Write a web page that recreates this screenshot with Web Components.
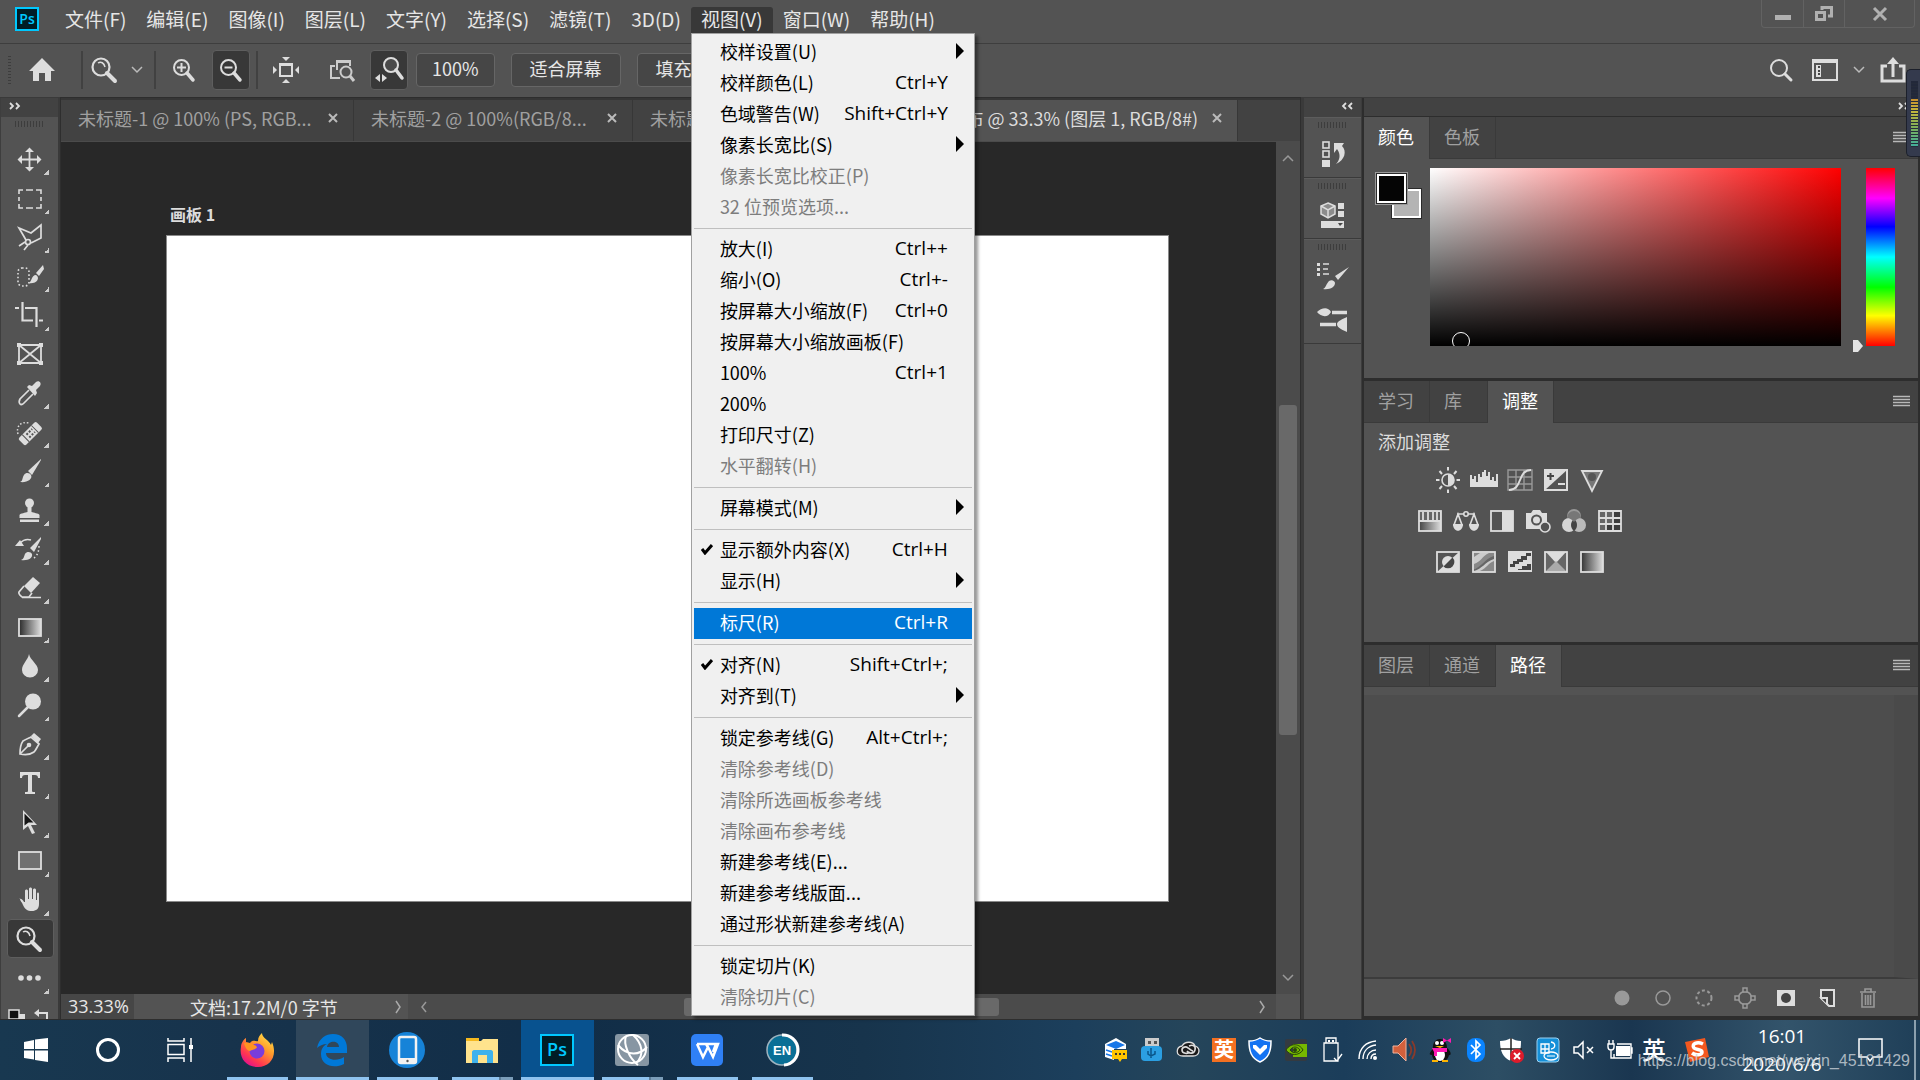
<!DOCTYPE html>
<html lang="zh-CN">
<head>
<meta charset="utf-8">
<title>Photoshop</title>
<style>
  html, body {
    margin: 0;
    height: 100%;
    overflow: hidden;
    background: #535353;
  }
  body {
    font-family: "Noto Sans CJK SC", "Noto Sans", sans-serif;
    font-size: 18px;
    color: #e6e6e6;
  }
</style>
</head>
<body>
<ps-app></ps-app>

<script>
// Shared reset, every shadow root starts with it
const base = `
  * { box-sizing: border-box; }
  button, input { font: inherit; color: inherit; border: 0; margin: 0; padding: 0; background: none; border-radius: 0; }
  button { display: flex; align-items: center; justify-content: center; white-space: nowrap; flex: none; }
`;

const brushHead = `<path d="M6 26c3-1 2-4 4-7 2-3 6-2 7 0 2 4-4 8-11 7z"/>`;

// name: [width, height, markup]
const icons = {
  psSmall: [24, 24, `<rect x="1" y="1" width="22" height="22" fill="#001d26" stroke="#00c8ff" stroke-width="2"/><text x="12" y="17" font-family="Open Sans" font-weight="600" font-size="14" fill="#00c8ff" text-anchor="middle">Ps</text>`],
  home: [26, 24, `<path d="M13 0 26 13h-4v10h-6v-8h-6v8H4V13H0z"/>`],
  zoom: [30, 30, `<g fill="none" stroke="#ddd"><circle cx="12" cy="12" r="8.5" stroke-width="2.2"/><path d="M9 8c3-2 6 0 7 4" stroke-width="1.5"/><path d="m18 18 8 8" stroke-width="4" stroke-linecap="round"/></g>`],
  zoomin: [24, 24, `<g fill="none" stroke="#ddd"><circle cx="9.5" cy="9.5" r="7.5" stroke-width="2"/><path d="M9.500 5v9M5 9.500h9" stroke-width="2"/><path d="m15 15 6 7" stroke-width="3.5" stroke-linecap="round"/></g>`],
  zoomout: [24, 24, `<g fill="none" stroke="#ddd"><circle cx="9.5" cy="9.5" r="7.5" stroke-width="2"/><path d="M5.500 9.500h8" stroke-width="2"/><path d="m15 15 6 7" stroke-width="3.5" stroke-linecap="round"/></g>`],
  fitview: [28, 28, `<path d="M10 1h8l-4 4zM10 27h8l-4-4zM1 10v8l4-4zM27 10v8l-4-4z"/><rect x="8" y="8" width="12" height="12" fill="none" stroke="#ddd" stroke-width="2"/><path d="M7 7h14v3H7z"/>`],
  zoomall: [26, 24, `<g fill="none" stroke="#ccc" stroke-width="2"><path d="M11 20H2V8h4M8 12V3h13v5M8 4h13"/><circle cx="17" cy="14" r="5.5" fill="#535353"/><path d="m21 18 4 5" stroke-width="3"/></g>`],
  scrubby: [28, 28, `<g fill="none" stroke="#ddd"><circle cx="16" cy="9" r="7" stroke-width="2" fill="#4a4a4a"/><path d="m21 14 6 8" stroke-width="3.5" stroke-linecap="round"/></g><path d="M5 18v8l-5-4zM7 18v8l5-4z"/>`],
  chevron: [12, 8, `<path d="m1 1 5 5 5-5" fill="none" stroke="#bbb" stroke-width="1.5"/>`],
  chevUp: [12, 8, `<path d="m1 7 5-5 5 5" fill="none" stroke="#999" stroke-width="1.5"/>`],
  chevDown: [12, 8, `<path d="m1 1 5 5 5-5" fill="none" stroke="#999" stroke-width="1.5"/>`],
  chevLeft: [8, 12, `<path d="m6 1-4 5 4 5" fill="none" stroke="#999" stroke-width="1.5"/>`],
  chevRight: [8, 14, `<path d="m2 1 4 6-4 6" fill="none" stroke="#aaa" stroke-width="1.5"/>`],
  expand: [12, 8, `<path d="m1 1 3 3-3 3M7 1l3 3-3 3" fill="none" stroke="#ddd" stroke-width="1.8"/>`],
  collapse: [12, 8, `<path d="M5 1 2 4l3 3M11 1 8 4l3 3" fill="none" stroke="#ddd" stroke-width="1.8"/>`],
  close: [10, 10, `<path d="m1 1 8 8m0-8-8 8" fill="none" stroke="#bbb" stroke-width="2"/>`],
  menu: [17, 12, `<path d="M0 1.500h17M0 4.500h17M0 7.500h17M0 10.500h17" stroke="#b8b8b8" stroke-width="1.5"/>`],
  min: [16, 16, `<path d="M0 9h16v5H0z" fill="#b0b0b0"/>`],
  restore: [18, 16, `<g fill="none" stroke="#b0b0b0" stroke-width="3"><path d="M7 4V1.500h9.500V10H13"/><rect x="1.5" y="6.5" width="8" height="7"/></g>`],
  closeWin: [16, 14, `<path d="m2 1 12 12M14 1 2 13" stroke="#b0b0b0" stroke-width="3"/>`],
  search: [24, 24, `<g fill="none" stroke="#ddd"><circle cx="10" cy="10" r="8" stroke-width="2"/><path d="m16 16 6 6" stroke-width="3" stroke-linecap="round"/></g>`],
  workspace: [26, 22, `<rect x="1" y="1" width="24" height="20" fill="none" stroke="#ddd" stroke-width="2"/><path d="M1 1h24v3H1zM4 6h5v12H4z"/><path d="M6 8h2M6 12h2M6 15h2" stroke="#444" stroke-width="2"/>`],
  share: [26, 26, `<path d="M7 9H2v15h22V9h-5M13 20V5" fill="none" stroke="#ddd" stroke-width="3"/><path d="M13 0 7 7h12z"/>`],

  move: [30, 30, `<path d="M15.500 5v21M5 15.500h21" stroke="#ddd" stroke-width="1.8"/><path d="m15.500 3.500 4.500 4.500h-9zM15.500 27.500 20 23h-9zM3.500 15.500 8 11v9zM27.500 15.500 23 11v9z"/>`],
  marquee: [30, 30, `<path d="M5 11V7h4M12 7h7M22 7h5v4M27 14v4M27 21v4h-5M19 25h-7M9 25H5v-4M5 18v-4" fill="none" stroke="#ddd" stroke-width="1.6"/>`],
  lasso: [30, 30, `<g fill="none" stroke="#ddd" stroke-width="1.7"><path d="M12 18 5 6l12 5 10-8v13l-10 5"/><circle cx="14" cy="20" r="2.5"/><path d="m11 20-6 4M14 23l-4 5"/></g>`],
  quicksel: [30, 30, `<rect x="4" y="7" width="11" height="18" rx="4" fill="none" stroke="#ddd" stroke-width="1.6" stroke-dasharray="1.6 2.2"/><path d="m29 4-7 8 3 3 5-7z"/><path d="M14 22c4 0 3-8 8-8 5 3 0 10-8 8z"/>`],
  crop: [30, 30, `<path d="M8.500 2v18.500H19M1 8h4M11 8h11.500v19M25 20.500h4" fill="none" stroke="#ddd" stroke-width="2.2"/>`],
  frame: [30, 30, `<path d="M5 6h22v18H5zM5 6l22 18M27 6 5 24" fill="none" stroke="#ddd" stroke-width="1.8"/><path d="M3 4h4v4H3zM25 4h4v4h-4zM3 22h4v4H3zM25 22h4v4h-4z"/>`],
  eyedropper: [30, 30, `<path d="m15 12-9 9c-1 2-1 4 0 5s3 0 4-1l9-9" fill="none" stroke="#ddd" stroke-width="1.7"/><path d="m13 9 2-2 3 1 4-4c3-2 6 1 4 4l-4 4 1 3-2 3z"/>`],
  heal: [30, 30, `<path d="M4 17c-2-7 2-13 11-11" fill="none" stroke="#ddd" stroke-width="1.5" stroke-dasharray="1.5 2"/><g transform="rotate(-45 16 17)"><rect x="4" y="12" width="25" height="10" rx="2"/><path d="M10 12v10M23 12v10" stroke="#535353"/><path d="M13 15h8M13 19h8" stroke="#535353" stroke-width="2" stroke-dasharray="2 1.5"/></g>`],
  brush: [30, 30, `<path d="M27 3 14 15l4 4L27 4z"/>${brushHead}`],
  stamp: [30, 30, `<circle cx="15.5" cy="8" r="4.5"/><path d="M13.500 11h4v6c2 1 7 1 8 3v3h-20v-3c1-2 6-2 8-3zM6 24.500h19V27H6z"/>`],
  history: [30, 30, `<path d="M27 3 16 14l4 4L27 5zM7 26c3-1 3-4 4-6 2-3 6-2 7 0 1 4-4 7-11 6zM1 12l5-6 4 6z"/><path d="M6 9c4-4 8-4 11-3" fill="none" stroke="#ddd" stroke-width="1.5"/><path d="M25 12c0 6-2 10-6 13" fill="none" stroke="#ddd" stroke-width="1.5" stroke-dasharray="1.5 2.5"/>`],
  eraser: [30, 30, `<path d="m19 4 7 6-9 10-7-7z"/><path d="m10 13-5 6c-1 2 2 4 3 5h7l3-4M8 24.500h19" fill="none" stroke="#ddd" stroke-width="1.7"/>`],
  gradient: [30, 30, `<defs><linearGradient id="g"><stop stop-color="#2a2a2a"/><stop offset="1" stop-color="#ddd"/></linearGradient></defs><rect x="5" y="7" width="22" height="17" fill="url(#g)" stroke="#ddd" stroke-width="1.8"/>`],
  blur: [30, 30, `<path d="M15 3c1 6 9 10 9 16a8 7.500 0 0 1-16 0c0-6 6-10 7-16z"/>`],
  dodge: [30, 30, `<circle cx="19" cy="11.5" r="8"/><path d="m14 17-9 9" stroke="#ddd" stroke-width="2.5" stroke-linecap="round"/>`],
  pen: [30, 30, `<path d="M6 25c0-5 0-9 3-13 3-2 6-3 8-4l8 7c-2 3-3 6-5 8-4 3-9 3-14 2zl8-8" fill="none" stroke="#ddd" stroke-width="1.7"/><circle cx="15" cy="16" r="2.3"/><path d="m17 7 3-3 7 6-3 4z"/>`],
  type: [30, 30, `<path d="M6 4h20v6h-2c0-2-1-3-3-3h-3v16c0 1 1 1 3 1v2H11v-2c2 0 3 0 3-1V7h-3c-2 0-3 1-3 3H6z"/>`],
  select: [30, 30, `<path d="M9 3v20l5-4 4 8 3-1-4-8h6z"/><path d="M10.500 6.500v12l4-3h5z" fill="#161616"/>`],
  rect: [30, 30, `<rect x="5" y="6" width="22" height="17" fill="#707070" stroke="#ddd" stroke-width="1.8"/>`],
  hand: [30, 30, `<path d="M5 14c2-1 4 1 5 3h1V6c0-2 3-2 3 0v8h1V4c0-2 3-2 3 0v10h1V5c0-2 3-2 3 0v10h1V9c0-2 2-2 2 0v10c0 5-3 7-7 7-5 0-7-2-9-6-1-3-3-4-3-6z"/>`],
  dots: [30, 30, `<circle cx="7" cy="15" r="2.8"/><circle cx="15.5" cy="15" r="2.8"/><circle cx="24" cy="15" r="2.8"/>`],
  swatchMini: [44, 18, `<path d="M10 6h7v12H3v-6h7z"/><rect x="1" y="2" width="10" height="9" fill="#111" stroke="#ddd" stroke-width="1.5"/><path d="M30 5h9v10" fill="none" stroke="#ddd" stroke-width="2"/><path d="m26 5 5-4v8zM35 12h8l-4 5z"/>`],

  historyPanel: [30, 28, `<g fill="none" stroke="#ddd" stroke-width="1.6"><rect x="5" y="2" width="6" height="6"/><rect x="5" y="11" width="6" height="6"/></g><path d="M4 20h8v7H4zM16 3h10l-2 3c5 5 3 14-6 18 4-4 5-10 1-15l-3 4z"/>`],
  libPanel: [30, 28, `<path d="m10 2 7 3v8l-7 4-7-4V5z" fill="#8c8c8c" stroke="#ddd" stroke-width="1.5"/><path d="m3 5 7 4 7-4M10 9v8" fill="none" stroke="#ddd" stroke-width="1.5"/><path d="M20 2h6v6h-6zM20 10h6v6h-6zM3 20h23v7H3z"/><path d="M20 22h5l-3 3z" fill="#444"/>`],
  brushPanel: [34, 28, `<path d="M1 1h3v3H1zM1 6h3v3H1zM1 11h3v3H1zM33 5 19 14l3 4zM7 27c3-1 3-5 6-8 3-2 6 0 6 2 0 4-5 7-12 6z"/><path d="M7 2h6M7 7h5M7 12h6" stroke="#ddd" stroke-width="1.6"/>`],
  brushSet: [34, 28, `<path d="M1 6c4-4 11-6 14 0-3 6-10 5-14 0zM31 11v15c-4-2-10-4-10-8 0-3 6-5 10-7z"/><path d="M16 6.500h15M4 18.500h16" stroke="#ddd" stroke-width="3.5"/>`],

  bright: [26, 26, `<circle cx="13" cy="13" r="6" fill="none" stroke="#ddd" stroke-width="1.6"/><path d="M13 7a6 6 0 0 1 0 12z"/><path d="M13 0v3.500M13 22.500V26M1 13h3.500M21.500 13H25M4.500 4l2.500 3M19 19l2.500 3M21.500 4 19 7M7 19l-2.500 3" stroke="#ddd" stroke-width="2"/>`],
  levels: [28, 26, `<path d="M0 20V8h2v4h2V9h2v6h2V7h2v3h2V5h2V3h2v6h2V5h2v8h2v-3h2v4h2V7h2v13z"/>`],
  curves: [26, 26, `<path d="M1 3h24v20H1zM9 3v20M17 3v20M1 10h24M1 17h24" fill="none" stroke="#999" stroke-width="1.4"/><path d="M2 23c14 0 8-20 22-20" fill="none" stroke="#ddd" stroke-width="2"/>`],
  exposure: [26, 26, `<rect x="2" y="3" width="22" height="20" fill="#535353" stroke="#ddd" stroke-width="2"/><path d="M2 3h22L2 23z"/><path d="M4 9h7M7.500 6v7" stroke="#444" stroke-width="2"/><path d="M15 17h7" stroke="#ddd" stroke-width="2"/>`],
  vibrance: [26, 26, `<path d="M3 4h20L13 24z" fill="#777" stroke="#ddd" stroke-width="1.8"/><circle cx="13" cy="10" r="4" fill="#555"/>`],
  hsl: [26, 26, `<rect x="2" y="3" width="22" height="20" fill="url(#h)" stroke="#ddd" stroke-width="1.8"/><defs><linearGradient id="h"><stop stop-color="#444"/><stop offset="1" stop-color="#ddd"/></linearGradient></defs><path d="M3 4h20v8H3z" fill="#666"/><path d="M6 4v8M11 4v8M16 4v8M20 4v8M2 13h22" stroke="#ddd" stroke-width="1.8"/>`],
  balance: [28, 26, `<g fill="none" stroke="#ddd" stroke-width="1.6"><path d="M5 6h7M16 6h7M6 6 2 17h8zM22 6l-4 11h8z"/><circle cx="14" cy="6" r="2.2"/></g><path d="M1 16h10c0 9-10 9-10 0zM17 16h10c0 9-10 9-10 0z"/>`],
  bw: [26, 26, `<rect x="2" y="3" width="22" height="20" fill="none" stroke="#ddd" stroke-width="1.8"/><path d="M13 3h11v20H13z"/>`],
  photo: [28, 28, `<path d="M2 6h5l2-3h7l2 3h5v16H2z"/><circle cx="12.5" cy="13" r="4.5" fill="none" stroke="#535353" stroke-width="2"/><circle cx="21" cy="20" r="5" fill="#535353" stroke="#ddd" stroke-width="1.6"/>`],
  mixer: [26, 26, `<circle cx="13" cy="8" r="7" fill="#999"/><circle cx="8" cy="17" r="7" fill="#d5d5d5"/><circle cx="18" cy="17" r="7" fill="#bbb"/><path d="M13 11c4 3 4 9 0 12-4-3-4-9 0-12z" fill="#444"/><path d="M6 10a7 7 0 0 1 14 0c-3 0-4 1-7 4-3-3-4-4-7-4z" fill="#777"/>`],
  lookup: [26, 26, `<rect x="2" y="3" width="22" height="20" fill="#3c3c3c"/><path d="M2 3h15v13H9v6H2z" fill="#666"/><path d="M2 3h22v20H2zM9 3v20M16 3v20M2 10h22M2 16h22" fill="none" stroke="#ddd" stroke-width="1.8"/>`],
  invert: [26, 26, `<rect x="2" y="3" width="22" height="20" fill="#535353" stroke="#ddd" stroke-width="1.8"/><path d="M24 3v20H2z"/><circle cx="13" cy="13" r="6" fill="#ddd"/><path d="M17.500 8.500a6 6 0 0 1-9 9z" fill="#444"/>`],
  poster: [26, 26, `<rect x="2" y="3" width="22" height="20" fill="#888" stroke="#ddd" stroke-width="1.8"/><path d="M3 15C10 13 11 7 18 4H9L3 8zM3 22h6c7-3 8-8 14-10v-3C15 11 13 18 3 20z" fill="#ccc"/><path d="M3 20c8-2 10-10 20-13v3C14 13 11 20 3 22z" fill="#666"/>`],
  threshold: [26, 26, `<rect x="1" y="2" width="24" height="21"/><path d="M3 15h3v-3h4v-2h4V7h5V4h5v3h-4v4h-4v2h-4v2H8v3H3zM11 20h4v-3h5v-2h4v6H11z" fill="#444"/>`],
  selective: [26, 26, `<rect x="2" y="3" width="22" height="20" fill="#666" stroke="#ddd" stroke-width="1.8"/><path d="M3 3h20L13 14z"/><path d="m13 12 10 10H3z" fill="#aaa"/>`],
  gradmap: [26, 26, `<defs><linearGradient id="m"><stop stop-color="#333"/><stop offset="1" stop-color="#ddd"/></linearGradient></defs><rect x="2" y="3" width="22" height="20" fill="url(#m)" stroke="#ddd" stroke-width="1.8"/>`],

  fillPath: [24, 24, `<circle cx="12" cy="12" r="7.5" fill="#999"/>`],
  strokePath: [24, 24, `<circle cx="12" cy="12" r="7" fill="none" stroke="#999" stroke-width="1.5"/>`],
  loadPath: [24, 24, `<circle cx="12" cy="12" r="7.5" fill="none" stroke="#999" stroke-width="2" stroke-dasharray="3 2.5"/>`],
  workPath: [24, 24, `<circle cx="12" cy="12" r="6.5" fill="none" stroke="#999" stroke-width="1.5"/><path d="M10 2h4v4h-4zM10 18h4v4h-4zM2 10h4v4H2zM18 10h4v4h-4z" fill="#535353" stroke="#999" stroke-width="1.5"/>`],
  mask: [24, 24, `<path d="M3 4h18v16H3z"/><circle cx="12" cy="12" r="5" fill="#444"/>`],
  newItem: [24, 24, `<path d="M6 4h13v16h-5l-8-8z" fill="#444" stroke="#ddd" stroke-width="2"/><path d="M4 11h9v9z" fill="#ddd"/><path d="M7 13h4v4z" fill="#444"/>`],
  trash: [24, 24, `<g fill="none" stroke="#999" stroke-width="1.6"><path d="M4 6h16M9 6V3h6v3M6 7v14h12V7M9.500 9v10M12 9v10M14.500 9v10"/></g>`],

  start: [26, 26, `<path d="m1 5 10-2v9H1zM12 2.500 25 1v11H12zM1 13.500h10v9L1 21zM12 13.500h13V25l-13-2z" fill="#fff"/>`],
  cortana: [26, 26, `<circle cx="13" cy="13" r="10.5" fill="none" stroke="#fff" stroke-width="3"/>`],
  taskview: [26, 26, `<g fill="none" stroke="#fff" stroke-width="1.5"><path d="M1 1v3h16V1M1 25v-4h16v4M1 7.500h16v10H1zM24 1v24"/></g><path d="M22 8h4v4h-4z" fill="#fff"/>`],
  firefox: [36, 36, `<defs><linearGradient id="f" x1="1" y1="0" x2=".3" y2="1"><stop stop-color="#fff44f"/><stop offset=".45" stop-color="#ff9a2b"/><stop offset=".8" stop-color="#ff3750"/><stop offset="1" stop-color="#e3138a"/></linearGradient></defs><path d="M23 1c0 5 7 7 9 12l1-3c6 14-2 25-14 25C6 35 0 25 2 15c0-4 3-8 5-9v4l4 1c3-4 6-1 8-2 0-4 2-6 4-8z" fill="url(#f)"/><circle cx="18" cy="19" r="7.5" fill="#7a3ddb"/><path d="M5 11c5-1 9 0 13 4-1 3-5 2-7 4-3 0-5-4-6-8z" fill="#ff9420"/>`],
  edge: [32, 34, `<path d="M1 15C3 5 10 1 17 1c9 0 14 6 14 14v5H10c0 7 11 9 18 4v7C18 36 5 33 5 21c0-5 2-8 6-10C7 11 3 13 1 15zm10-1h12c0-7-11-7-12 0z" fill="#0078d7"/>`],
  phone: [36, 36, `<circle cx="18" cy="18" r="18" fill="#1683d8"/><rect x="10" y="5" width="17" height="26" rx="2" fill="#1683d8" stroke="#f2f2f2" stroke-width="2.5"/><path d="M10 26h17v5H10z" fill="#f2f2f2"/><circle cx="18.5" cy="29" r="1.2" fill="#555"/>`],
  explorer: [34, 28, `<path d="M1 2h13v4H1z" fill="#f5b91f"/><path d="M1 5h15l2-2h15v24H1z" fill="#ffe38d"/><path d="M7 27V16c0-1 1-2 2-2h17c1 0 2 1 2 2v11h-6v-8h-9v8z" fill="#3fb2ec"/>`],
  psBig: [36, 34, `<rect x="2" y="2" width="32" height="30" fill="#001d26" stroke="#00c8ff" stroke-width="2"/><text x="18" y="23" font-family="Open Sans" font-weight="600" font-size="18" fill="#00c8ff" text-anchor="middle">Ps</text>`],
  globe: [36, 34, `<rect x="1" y="1" width="34" height="32" rx="3" fill="#8796a3"/><g fill="none" stroke="#fff" stroke-width="2"><circle cx="18" cy="16" r="14"/><path d="M4 12c10 12 22 10 29 2M12 3c-3 8 3 22 12 29M19 2c9 8 12 20 3 28"/></g>`],
  wps: [34, 34, `<rect x="1" y="1" width="32" height="32" rx="5" fill="#2f80f5"/><path d="M7 11h21l-5 13-5-10-5 10-6-13m9 0 3 5m7-5-3 8" fill="none" stroke="#fff" stroke-width="2.5"/>`],
  en: [34, 34, `<circle cx="17" cy="17" r="15" fill="#0a6f96" stroke="#9fb4c0" stroke-width="1.5"/><path d="M17 2a15 15 0 0 1 2 30" fill="none" stroke="#fff" stroke-width="3"/><text x="17" y="22" font-family="Liberation Sans" font-weight="700" font-size="13" fill="#fff" text-anchor="middle">EN</text>`],

  t1: [26, 26, `<path d="M2 7 13 1l10 6v5H11v11L2 20z" fill="#fff"/><path d="m3 8 10-4 9 4-9 4z" fill="#1877e8"/><path d="M3 13l6 2M3 17l6 2" stroke="#1877e8" stroke-width="1.5"/><path d="M9 13h15v9h-5l-2 3-2-3H9z" fill="#ffc400"/><path d="M12 17h2M16 17h2M20 17h2" stroke="#333" stroke-width="2"/>`],
  t2: [24, 26, `<path d="M5 1h14v9H5z" fill="#ccc"/><path d="M8 4h3v3H8zM14 4h3v3h-3z" fill="#555"/><rect x="1" y="9" width="21" height="15" rx="4" fill="#2b9fe2"/><path d="M11 21V11M8 14v3l3 2 4-2v-3" fill="none" stroke="#0a568a" stroke-width="1.5"/>`],
  t3: [24, 20, `<g fill="none"><path d="M7 16c-8 0-7-9-1-10 3-5 11-5 13 0 6 2 5 10-2 10z" fill="#1a1a1a" stroke="#ddd" stroke-width="1.3"/><path d="M13 6c4-2 7 0 6 4-1 4-6 4-8 1M14 12c-2 2-8 2-8-2 0-3 4-4 6-2 2 1 3 3 5 3" stroke="#ddd" stroke-width="1.6"/></g>`],
  t4: [24, 24, `<path d="M0 0h24v24H0z" fill="#f37021"/><text x="12" y="19" font-family="Noto Sans CJK SC" font-weight="700" font-size="20" fill="#fff" text-anchor="middle">英</text>`],
  t5: [24, 26, `<path d="M12 1c3 2 7 3 11 3 0 10-2 17-11 21C3 21 1 14 1 4c4 0 8-1 11-3z" fill="#1473f2" stroke="#fff" stroke-width="1.5"/><path d="M5 8h14v3l-7 7-7-7z" fill="#fff"/><path d="m8 8 4 4 4-4z" fill="#1473f2"/>`],
  t6: [24, 24, `<rect x="1" y="1" width="22" height="22" rx="2" fill="#343a40"/><path d="M9 6h14v13H9z" fill="#76b900"/><path d="M2 12c5-8 14-6 17 0-4 6-13 6-17 0zm4 0c3 4 8 3 10 0-3-4-7-4-10 0z" fill="#76b900" stroke="#28450b"/><circle cx="11" cy="12" r="2" fill="#28450b"/>`],
  t7: [24, 28, `<g fill="none" stroke="#fff" stroke-width="1.3"><path d="M6 7V2h10v5M4 7h14v18H4zM14 22l3 3 5-7"/></g><path d="M8 4h2v2H8zM12 4h2v2h-2z" fill="#fff"/>`],
  t8: [22, 22, `<g fill="none" stroke="#fff" stroke-width="1.4"><path d="M2 20C2 9 9 3 19 2M6 20C6 12 11 7 19 6M10 20c0-5 4-9 9-9M14 20c0-3 2-5 5-5"/></g><circle cx="18" cy="19" r="2" fill="#fff"/>`],
  t9: [24, 26, `<path d="M1 9h5l8-8v23l-8-8H1z" fill="#d2603c" stroke="#f1b39d"/><path d="M17 7c3 4 3 8 0 12M20 4c4 6 4 12 0 18" fill="none" stroke="#8a3a2a" stroke-width="1.8"/>`],
  t10: [24, 26, `<path d="M5 12c-1-13 14-13 14-1 5 4 4 8 2 7-1 5-5 7-9 7s-7-2-8-7c-4 0-2-3 1-6z" fill="#111"/><ellipse cx="12" cy="18" rx="5" ry="6" fill="#fff"/><circle cx="9" cy="6" r="2" fill="#fff"/><circle cx="14" cy="6" r="2" fill="#fff"/><path d="M7 9h9l-4 2z" fill="#ffb400"/><path d="M4 11h15v4H9v4H6v-4zM15 1l8 5V1l-8 5z" fill="#ff19b4"/><path d="M4 23h6v2H4zM14 23h6v2h-6z" fill="#ffb400"/>`],
  t11: [20, 26, `<rect x="1" y="1" width="18" height="24" rx="8" fill="#0a84ff"/><path d="m5 8 9 9-4 4V4l4 4-9 9" fill="none" stroke="#fff" stroke-width="1.7"/>`],
  t12: [26, 28, `<path d="M12 2c3 2 6 3 10 3 0 11-2 17-10 20C4 22 1 15 1 5c4 0 8-1 11-3z" fill="#fff"/><path d="M12 2v23M1 13h22" stroke="#222" stroke-width="1.5"/><circle cx="18" cy="20" r="7" fill="#dd1c2b"/><path d="m15 17 6 6m0-6-6 6" stroke="#fff" stroke-width="1.8"/>`],
  t13: [24, 26, `<rect x="1" y="1" width="22" height="24" rx="3" fill="#1590d8" stroke="#9cd2f2"/><g fill="none" stroke="#fff" stroke-width="1.3"><path d="M5 7h8v9H5zM9 7v9M5 12h8M15 5c5 1 5 6 0 7"/><ellipse cx="15" cy="19" rx="7" ry="4"/></g><path d="M11 19h8" stroke="#fff"/>`],
  t14: [24, 24, `<g fill="none" stroke="#fff" stroke-width="1.5"><path d="M2 9h4l5-5v16l-5-5H2zM15 9l6 6m0-6-6 6"/></g>`],
  t15: [26, 20, `<path d="M9 6h14v10H9z" fill="#fff"/><path d="M10 4h14v14H7v-4M24 8h1v5h-1M1 4v3c0 4 6 4 6 0V4zM4 10v8h3M2 0v4M6 0v4" fill="none" stroke="#fff" stroke-width="1.4"/>`],
  t16: [26, 26, `<path d="M1 5 21 1l4 19-19 5z" fill="#f4581f"/><path d="M19 7c-6-3-12 0-9 4 2 2 8 1 8 4 0 3-6 4-10 1" fill="none" stroke="#fff" stroke-width="3.5"/>`],
  notice: [26, 26, `<path d="M1 2h23v18h-9l-3 4-3-4H1z" fill="none" stroke="#fff" stroke-width="1.5"/>`],
};

class PsIcon extends HTMLElement {
  constructor() {
    super();
    this.attachShadow({ mode: "open" });
  }

  connectedCallback() {
    const [w, h, body] = icons[this.getAttribute("name")];
    this.shadowRoot.innerHTML = `
      <style>
        :host { display: inline-block; flex: none; }
        svg { display: block; overflow: visible; }
      </style>
      <svg width="${w}" height="${h}" viewBox="0 0 ${w} ${h}" fill="#ddd" aria-hidden="true">${body}</svg>`;
  }
}

/* one row of a drop-down menu */
class PsMenuItem extends HTMLElement {
  constructor() {
    super();
    this.attachShadow({ mode: "open" });
  }

  connectedCallback() {
    const key = this.getAttribute("key") || "";
    const has = (name) => this.hasAttribute(name);
    this.shadowRoot.innerHTML = `
      <style>
        ${base}
        :host { display: block; }
        button {
          width: 100%;
          height: 31px;
          padding-bottom: 3px;
          display: grid;
          grid-template-columns: 26px 1fr auto 24px;
          justify-items: start;
          color: #000;
          font-size: 18px;
          line-height: 28px;
        }
        button:disabled { color: #7d7d7d; }
        :host([active]) button { background: #0078d7; color: #fff; }
        .key { font-family: "Open Sans", "Noto Sans", sans-serif; font-size: 19px; }
        svg { display: block; justify-self: center; }
      </style>
      <button role="menuitem" ${has("off") ? "disabled" : ""}>
        ${has("checked") ? `<svg width="12" height="12" viewBox="0 0 12 12"><path d="M1 6l3 4 7-8" fill="none" stroke="#000" stroke-width="3"/></svg>` : "<span></span>"}
        <slot></slot>
        <span class="key">${key}</span>
        ${has("sub") ? `<svg width="8" height="16" viewBox="0 0 8 16"><path d="M0 0l8 8-8 8z"/></svg>` : "<span></span>"}
      </button>`;
  }
}

class PsMenu extends HTMLElement {
  constructor() {
    super();
    this.attachShadow({ mode: "open" });
  }

  connectedCallback() {
    this.shadowRoot.innerHTML = `
      <style>
        :host {
          display: block;
          width: 284px;
          padding: 3px 2px 2px;
          box-sizing: border-box;
          background: #f0f0f0;
          border: 1px solid #a0a0a0;
          box-shadow: 3px 3px 3px rgba(0, 0, 0, .4);
        }
        ::slotted(hr) { height: 1px; margin: 5px 0; border: 0; background: #bfbfbf; }
      </style>
      <slot></slot>`;
  }
}

class PsMenubar extends HTMLElement {
  constructor() {
    super();
    this.attachShadow({ mode: "open" });
  }

  connectedCallback() {
    const before = ["文件(F)", "编辑(E)", "图像(I)", "图层(L)", "文字(Y)", "选择(S)", "滤镜(T)", "3D(D)"];
    const after = ["窗口(W)", "帮助(H)"];
    this.shadowRoot.innerHTML = `
      <style>
        ${base}
        :host { display: flex; height: 43px; background: #535353; border-bottom: 1px solid #3e3e3e; }
        nav { display: flex; align-items: flex-start; padding: 7px 0 0 15px; flex: 1; }
        nav > ps-icon { margin-right: 16px; }
        button { height: 26px; padding: 0 10px 4px; font-size: 19px; }
        .open { position: relative; z-index: 10; }
        .open > button { background: #383838; border-radius: 3px 3px 0 0; }
        ps-menu { position: absolute; top: 100%; left: 0; }
        .win { display: flex; height: 28px; margin-right: 5px; border: 1px solid #626262; border-top: 0; border-radius: 0 0 4px 4px; }
        .win button { width: 41px; height: 27px; padding: 0; }
        .win button + button { border-left: 1px solid #626262; }
        .win .x { width: 70px; }
      </style>
      <nav aria-label="菜单栏">
        <ps-icon name="psSmall"></ps-icon>
        ${before.map((t) => `<button>${t}</button>`).join("")}
        <div class="open">
          <button>视图(V)</button>
          <ps-menu role="menu">
            <ps-menu-item sub>校样设置(U)</ps-menu-item>
            <ps-menu-item key="Ctrl+Y">校样颜色(L)</ps-menu-item>
            <ps-menu-item key="Shift+Ctrl+Y">色域警告(W)</ps-menu-item>
            <ps-menu-item sub>像素长宽比(S)</ps-menu-item>
            <ps-menu-item off>像素长宽比校正(P)</ps-menu-item>
            <ps-menu-item off>32 位预览选项...</ps-menu-item>
            <hr>
            <ps-menu-item key="Ctrl++">放大(I)</ps-menu-item>
            <ps-menu-item key="Ctrl+-">缩小(O)</ps-menu-item>
            <ps-menu-item key="Ctrl+0">按屏幕大小缩放(F)</ps-menu-item>
            <ps-menu-item>按屏幕大小缩放画板(F)</ps-menu-item>
            <ps-menu-item key="Ctrl+1">100%</ps-menu-item>
            <ps-menu-item>200%</ps-menu-item>
            <ps-menu-item>打印尺寸(Z)</ps-menu-item>
            <ps-menu-item off>水平翻转(H)</ps-menu-item>
            <hr>
            <ps-menu-item sub>屏幕模式(M)</ps-menu-item>
            <hr>
            <ps-menu-item checked key="Ctrl+H">显示额外内容(X)</ps-menu-item>
            <ps-menu-item sub>显示(H)</ps-menu-item>
            <hr>
            <ps-menu-item active key="Ctrl+R">标尺(R)</ps-menu-item>
            <hr>
            <ps-menu-item checked key="Shift+Ctrl+;">对齐(N)</ps-menu-item>
            <ps-menu-item sub>对齐到(T)</ps-menu-item>
            <hr>
            <ps-menu-item key="Alt+Ctrl+;">锁定参考线(G)</ps-menu-item>
            <ps-menu-item off>清除参考线(D)</ps-menu-item>
            <ps-menu-item off>清除所选画板参考线</ps-menu-item>
            <ps-menu-item off>清除画布参考线</ps-menu-item>
            <ps-menu-item>新建参考线(E)...</ps-menu-item>
            <ps-menu-item>新建参考线版面...</ps-menu-item>
            <ps-menu-item>通过形状新建参考线(A)</ps-menu-item>
            <hr>
            <ps-menu-item>锁定切片(K)</ps-menu-item>
            <ps-menu-item off>清除切片(C)</ps-menu-item>
          </ps-menu>
        </div>
        ${after.map((t) => `<button>${t}</button>`).join("")}
      </nav>
      <div class="win">
        <button aria-label="最小化"><ps-icon name="min"></ps-icon></button>
        <button aria-label="还原"><ps-icon name="restore"></ps-icon></button>
        <button class="x" aria-label="关闭"><ps-icon name="closeWin"></ps-icon></button>
      </div>`;
  }
}

class PsOptions extends HTMLElement {
  constructor() {
    super();
    this.attachShadow({ mode: "open" });
  }

  connectedCallback() {
    this.shadowRoot.innerHTML = `
      <style>
        ${base}
        :host { display: flex; align-items: center; height: 53px; padding-bottom: 2px; background: #535353; box-sizing: border-box; }
        .grip { width: 3px; height: 28px; margin-left: 8px; background: repeating-linear-gradient(#3d3d3d 0 1px, transparent 1px 3px); }
        .sep { width: 2px; height: 38px; background: #414141; flex: none; }
        .tool { width: 38px; height: 40px; border-radius: 4px; }
        .on { background: #383838; border: 1px solid #5e5e5e; }
        .home { width: 62px; margin-right: 8px; }
        .zoom { width: 71px; padding-right: 6px; gap: 12px; }
        .wide { width: 56px; }
        .after-group { margin-right: 6px; }
        .text { height: 34px; margin-right: 16px; padding: 0 18px 4px; border: 1px solid #666; border-radius: 4px; background: #464646; }
        .text.first { margin-left: 8px; padding: 0 15px 4px; }
        .right { display: flex; align-items: center; gap: 15px; margin-left: auto; padding-right: 14px; }
        .right > :first-child { margin-right: 4px; }
      </style>
      <span class="grip"></span>
      <button class="home" aria-label="主页"><ps-icon name="home"></ps-icon></button>
      <span class="sep"></span>
      <button class="zoom" aria-label="缩放工具"><ps-icon name="zoom"></ps-icon><ps-icon name="chevron"></ps-icon></button>
      <span class="sep"></span>
      <button class="tool wide" aria-label="放大"><ps-icon name="zoomin"></ps-icon></button>
      <button class="tool on after-group" aria-label="缩小"><ps-icon name="zoomout"></ps-icon></button>
      <span class="sep"></span>
      <button class="tool wide" aria-label="调整窗口大小以满屏显示"><ps-icon name="fitview"></ps-icon></button>
      <button class="tool wide" aria-label="缩放所有窗口"><ps-icon name="zoomall"></ps-icon></button>
      <button class="tool on" aria-label="细微缩放"><ps-icon name="scrubby"></ps-icon></button>
      <button class="text first">100%</button>
      <button class="text">适合屏幕</button>
      <button class="text">填充屏幕</button>
      <div class="right">
        <button aria-label="搜索"><ps-icon name="search"></ps-icon></button>
        <button aria-label="工作区"><ps-icon name="workspace"></ps-icon></button>
        <button aria-label="选择工作区"><ps-icon name="chevron"></ps-icon></button>
        <button aria-label="共享"><ps-icon name="share"></ps-icon></button>
      </div>`;
  }
}

class PsToolbar extends HTMLElement {
  constructor() {
    super();
    this.attachShadow({ mode: "open" });
  }

  connectedCallback() {
    const tools = [
      ["move", "移动"], ["marquee", "矩形选框"], ["lasso", "多边形套索"], ["quicksel", "快速选择"],
      ["crop", "裁剪"], ["frame", "图框"], ["eyedropper", "吸管"], ["heal", "污点修复"],
      ["brush", "画笔"], ["stamp", "仿制图章"], ["history", "历史记录画笔"], ["eraser", "橡皮擦"],
      ["gradient", "渐变"], ["blur", "模糊"], ["dodge", "减淡"], ["pen", "钢笔"],
      ["type", "文字"], ["select", "路径选择"], ["rect", "矩形"], ["hand", "抓手"],
      ["zoom", "缩放"], ["dots", "编辑工具栏"],
    ];
    this.shadowRoot.innerHTML = `
      <style>
        ${base}
        :host { display: flex; flex-direction: column; width: 58px; overflow: hidden; border-left: 1px solid #3e3e3e; background: #535353; box-sizing: border-box; }
        .head { height: 19px; padding: 0 0 3px 8px; background: #424242; flex: none; justify-content: flex-start; }
        .grip { width: 29px; height: 6px; margin: 4px 14px 12px; background: repeating-linear-gradient(90deg, #3d3d3d 0 1px, transparent 1px 3px); flex: none; }
        .tools { display: flex; flex-direction: column; padding-left: 6px; flex: none; }
        .tool { position: relative; width: 47px; height: 39px; padding-left: 6px; justify-content: flex-start; border: 1px solid transparent; border-radius: 4px; }
        .tool.on { background: #383838; border-color: #5e5e5e; }
        .more::after { content: ""; position: absolute; right: 4px; bottom: 2px; width: 5px; height: 5px; background: linear-gradient(135deg, transparent 50%, #ccc 50%); }
        .mini { padding: 8px 0 0 7px; }
      </style>
      <button class="head" aria-label="展开工具栏"><ps-icon name="expand"></ps-icon></button>
      <div class="grip"></div>
      <div class="tools">
        ${tools.map(([id, label]) => `<button class="tool ${id === "zoom" ? "on" : ""} ${id === "frame" || id === "zoom" ? "" : "more"}" aria-label="${label}"><ps-icon name="${id}"></ps-icon></button>`).join("")}
      </div>
      <div class="mini"><ps-icon name="swatchMini"></ps-icon></div>`;
  }
}

class PsDocTab extends HTMLElement {
  constructor() {
    super();
    this.attachShadow({ mode: "open" });
  }

  connectedCallback() {
    this.shadowRoot.innerHTML = `
      <style>
        ${base}
        :host { display: flex; align-items: center; gap: 14px; padding: 0 15px 6px 17px; color: #a0a0a0; border-right: 1px solid #373737; flex: none; box-sizing: border-box; }
        :host([active]) { background: #535353; color: #dcdcdc; }
        .name { flex: 1; justify-content: flex-start; }
        :host([active]) .name { justify-content: flex-end; }
      </style>
      <button class="name" role="tab"><slot></slot></button>
      <button aria-label="关闭"><ps-icon name="close"></ps-icon></button>`;
  }
}

class PsDocument extends HTMLElement {
  constructor() {
    super();
    this.attachShadow({ mode: "open" });
  }

  connectedCallback() {
    this.shadowRoot.innerHTML = `
      <style>
        ${base}
        :host { display: flex; flex-direction: column; flex: 1; min-width: 0; margin: 0 4px 0 3px; outline: 1px solid #2e2e2e; background: #282828; }
        .tabs { display: flex; height: 44px; background: #424242; border-top: 2px solid #363636; border-bottom: 1px solid #4b4b4b; flex: none; }
        .t1 { width: 293px; } .t2 { width: 279px; } .t3 { width: 270px; } .t4 { width: 335px; }
        .view { display: grid; grid-template: 1fr 25px / 1fr 24px; flex: 1; min-height: 0; }
        .stage { display: flex; flex-direction: column; padding: 58px 107px 92px 105px; }
        h2 { margin: 0 0 7px; padding-left: 4px; height: 28px; line-height: 28px; font-size: 16px; font-weight: 700; color: #dcdcdc; }
        .board { flex: 1; background: #fff; border: 1px solid #8a8a8a; }
        .v { display: flex; flex-direction: column; align-items: center; padding: 12px 0; background: #4b4b4b; }
        .v i { width: 18px; height: 330px; margin: 243px 0 auto; border-radius: 3px; background: #696969; }
        .foot { display: flex; background: #4b4b4b; min-width: 0; }
        input { width: 73px; padding: 0 0 2px 7px; font: 18px "Open Sans", sans-serif; background: #464646; }
        .info { display: flex; align-items: center; justify-content: space-between; width: 274px; padding: 0 6px 0 56px; background: #535353; }
        .h { display: flex; align-items: center; flex: 1; padding: 0 10px 0 12px; }
        .h i { width: 315px; height: 18px; margin: 0 auto 0 256px; border-radius: 3px; background: #696969; }
        .corner { background: #535353; }
      </style>
      <div class="tabs" role="tablist">
        <ps-doc-tab class="t1">未标题-1 @ 100% (PS, RGB...</ps-doc-tab>
        <ps-doc-tab class="t2">未标题-2 @ 100%(RGB/8...</ps-doc-tab>
        <ps-doc-tab class="t3">未标题-3 @ 100%(RGB/8...</ps-doc-tab>
        <ps-doc-tab class="t4" active>画布 @ 33.3% (图层 1, RGB/8#)</ps-doc-tab>
      </div>
      <div class="view">
        <div class="stage">
          <h2>画板 1</h2>
          <div class="board"></div>
        </div>
        <div class="v"><ps-icon name="chevUp"></ps-icon><i></i><ps-icon name="chevDown"></ps-icon></div>
        <div class="foot">
          <input value="33.33%" aria-label="缩放比例">
          <div class="info"><span>文档:17.2M/0 字节</span><ps-icon name="chevRight"></ps-icon></div>
          <div class="h"><ps-icon name="chevLeft"></ps-icon><i></i><ps-icon name="chevRight"></ps-icon></div>
        </div>
        <div class="corner"></div>
      </div>`;
  }
}

class PsDock extends HTMLElement {
  constructor() {
    super();
    this.attachShadow({ mode: "open" });
  }

  connectedCallback() {
    this.shadowRoot.innerHTML = `
      <style>
        ${base}
        :host { display: block; width: 58px; background: #535353; border-right: 1px solid #3c3c3c; flex: none; box-sizing: border-box; }
        .head { width: 100%; height: 19px; padding: 0 8px 3px 0; justify-content: flex-end; background: #424242; }
        section { display: flex; flex-direction: column; align-items: center; gap: 16px; padding: 4px 0 9px; border-bottom: 1px solid #3a3a3a; border-top: 1px solid #5c5c5c; }
        section::before { content: ""; width: 29px; height: 6px; margin-bottom: -4px; background: repeating-linear-gradient(90deg, #3d3d3d 0 1px, transparent 1px 3px); }
      </style>
      <button class="head" aria-label="展开面板"><ps-icon name="collapse"></ps-icon></button>
      <section><button aria-label="历史记录"><ps-icon name="historyPanel"></ps-icon></button></section>
      <section><button aria-label="库"><ps-icon name="libPanel"></ps-icon></button></section>
      <section>
        <button aria-label="画笔设置"><ps-icon name="brushPanel"></ps-icon></button>
        <button aria-label="画笔"><ps-icon name="brushSet"></ps-icon></button>
      </section>`;
  }
}

/* tabs="a,b,c" selected="1" */
class PsPanel extends HTMLElement {
  constructor() {
    super();
    this.attachShadow({ mode: "open" });
  }

  connectedCallback() {
    const tabs = this.getAttribute("tabs").split(",");
    const selected = Number(this.getAttribute("selected"));
    this.shadowRoot.innerHTML = `
      <style>
        ${base}
        :host { display: flex; flex-direction: column; background: #535353; border-bottom: 3px solid #2d2d2d; box-sizing: border-box; }
        .tabs { display: flex; height: 42px; background: #424242; border-bottom: 1px solid #3a3a3a; flex: none; }
        .tab { min-width: 58px; height: 42px; padding: 0 15px 5px 14px; justify-content: flex-start; color: #a0a0a0; border-right: 1px solid #3a3a3a; }
        .tab.on { background: #535353; color: #fff; }
        .menu { margin-left: auto; padding: 0 8px 2px 0; }
        .body { display: flex; flex-direction: column; flex: 1; }
      </style>
      <div class="tabs" role="tablist">
        ${tabs.map((t, i) => `<button class="tab ${i === selected ? "on" : ""}" role="tab" aria-selected="${i === selected}">${t}</button>`).join("")}
        <button class="menu" aria-label="面板菜单"><ps-icon name="menu"></ps-icon></button>
      </div>
      <div class="body"><slot></slot></div>`;
  }
}

class PsColorPicker extends HTMLElement {
  constructor() {
    super();
    this.attachShadow({ mode: "open" });
  }

  connectedCallback() {
    this.shadowRoot.innerHTML = `
      <style>
        ${base}
        :host { display: flex; align-items: flex-start; padding: 9px 23px 0 13px; }
        .chips { position: relative; width: 53px; height: 54px; margin-top: 6px; flex: none; }
        .chip { position: absolute; width: 29px; height: 29px; border: 2px solid #fff; box-shadow: 0 0 0 1px #2a2a2a; }
        .bg { left: 15px; top: 15px; background: #b4b4b4; }
        .fg { left: 0; top: 0; background: #050505; box-shadow: 0 0 0 1px #2a2a2a, 0 0 0 2px #999; }
        .field {
          position: relative; flex: 1; height: 178px; overflow: hidden;
          background: linear-gradient(transparent, #000), linear-gradient(90deg, #fff, #f00);
        }
        .field i { position: absolute; left: 22px; bottom: -4px; width: 18px; height: 18px; border: 1px solid #fff; border-radius: 50%; }
        input {
          appearance: none; display: block; width: 46px; height: 190px; margin: -6px 0 0 8px;
          writing-mode: vertical-lr; direction: rtl;
          background: linear-gradient(#f00, #f0f 17%, #00f 33%, #0ff 50%, #0f0 67%, #ff0 83%, #f00) right center / 29px 178px no-repeat;
        }
        input::-webkit-slider-runnable-track { width: 46px; height: 190px; }
        input::-webkit-slider-thumb {
          appearance: none; width: 10px; height: 12px; margin-left: 4px;
          background: #e4e4e4; clip-path: polygon(0 0, 50% 0, 100% 50%, 50% 100%, 0 100%);
        }
      </style>
      <div class="chips"><button class="chip bg" aria-label="背景色"></button><button class="chip fg" aria-label="前景色"></button></div>
      <div class="field"><i></i></div>
      <input type="range" min="0" max="360" value="0" aria-label="色相">`;
  }
}

class PsAdjustments extends HTMLElement {
  constructor() {
    super();
    this.attachShadow({ mode: "open" });
  }

  connectedCallback() {
    const rows = [
      ["bright", "levels", "curves", "exposure", "vibrance"],
      ["hsl", "balance", "bw", "photo", "mixer", "lookup"],
      ["invert", "poster", "threshold", "selective", "gradmap"],
    ];
    this.shadowRoot.innerHTML = `
      <style>
        ${base}
        :host { display: block; padding: 4px 14px; color: #dcdcdc; }
        p { margin: 0 0 4px; line-height: 28px; }
        .grid { display: inline-flex; flex-direction: column; align-items: center; margin-left: 34px; }
        .row { display: flex; }
        button { width: 36px; height: 41px; }
      </style>
      <p>添加调整</p>
      <div class="grid">
        ${rows.map((row) => `<div class="row">${row.map((n) => `<button aria-label="${n}"><ps-icon name="${n}"></ps-icon></button>`).join("")}</div>`).join("")}
      </div>`;
  }
}

class PsPaths extends HTMLElement {
  constructor() {
    super();
    this.attachShadow({ mode: "open" });
  }

  connectedCallback() {
    const actions = [
      ["fillPath", "用前景色填充路径"], ["strokePath", "用画笔描边路径"], ["loadPath", "将路径作为选区载入"],
      ["workPath", "从选区生成工作路径"], ["mask", "添加蒙版"], ["newItem", "创建新路径"], ["trash", "删除当前路径"],
    ];
    this.shadowRoot.innerHTML = `
      <style>
        ${base}
        :host { display: flex; flex-direction: column; flex: 1; }
        .list { flex: 1; margin-top: 8px; background: #4d4d4d; border-bottom: 2px solid #3c3c3c; border-right: 24px solid #4a4a4a; }
        .bar { display: flex; justify-content: flex-end; height: 37px; padding-right: 30px; }
        .bar button { width: 41px; }
      </style>
      <div class="list"></div>
      <div class="bar">
        ${actions.map(([n, label]) => `<button aria-label="${label}"><ps-icon name="${n}"></ps-icon></button>`).join("")}
      </div>`;
  }
}

class PsSidebar extends HTMLElement {
  constructor() {
    super();
    this.attachShadow({ mode: "open" });
  }

  connectedCallback() {
    this.shadowRoot.innerHTML = `
      <style>
        ${base}
        :host { display: flex; flex-direction: column; width: 558px; border-left: 2px solid #2d2d2d; border-right: 2px solid #2d2d2d; flex: none; box-sizing: border-box; }
        .head { width: 100%; height: 19px; padding: 0 8px 3px 0; justify-content: flex-end; background: #424242; border-bottom: 1px solid #2d2d2d; }
        .color, .adjust { height: 264px; }
        .paths { flex: 1; }
      </style>
      <button class="head" aria-label="折叠面板"><ps-icon name="expand"></ps-icon></button>
      <ps-panel class="color" tabs="颜色,色板" selected="0"><ps-color-picker></ps-color-picker></ps-panel>
      <ps-panel class="adjust" tabs="学习,库,调整" selected="2"><ps-adjustments></ps-adjustments></ps-panel>
      <ps-panel class="paths" tabs="图层,通道,路径" selected="2"><ps-paths></ps-paths></ps-panel>`;
  }
}

class WinTaskbar extends HTMLElement {
  constructor() {
    super();
    this.attachShadow({ mode: "open" });
  }

  connectedCallback() {
    const apps = [
      ["firefox", "Firefox", ""], ["edge", "Edge", "hot"], ["phone", "手机", ""], ["explorer", "文件资源管理器", "many"],
      ["psBig", "Photoshop", "active"], ["globe", "浏览器", "many"], ["wps", "WPS", ""], ["en", "EN", ""],
    ];
    const tray = (from, to) => {
      let out = "";
      for (let i = from; i <= to; i++) out += `<button aria-label="托盘 ${i}"><ps-icon name="t${i}"></ps-icon></button>`;
      return out;
    };
    this.shadowRoot.innerHTML = `
      <style>
        ${base}
        :host {
          display: flex; height: 60px; color: #fff; overflow: hidden; position: relative;
          background: linear-gradient(90deg, #183850, #17334c 12%, #112d47 30%, #17344c 45%, #1c3f5c 56%, #25455a 62%, #1b3d5a 70%, #2d4e64 78%, #1a3650 85%, #33546b 93%, #1f3f58);
        }
        .sys button { width: 72px; }
        .sys, .apps, .tray { display: flex; }
        .apps { gap: 2px; margin-left: 5px; }
        .apps button { position: relative; width: 73px; height: 60px; padding: 0 2px 1px 0; }
        .apps button::after { content: ""; position: absolute; left: 6px; right: 6px; bottom: 0; height: 3px; background: #8fc3ef; }
        .apps .hot { background: #30475b; }
        .apps .active { background: #08528f; }
        .apps .hot::after, .apps .active::after { left: 0; right: 0; }
        .apps .many::after { background: linear-gradient(90deg, #8fc3ef 0 47px, #5d7d98 47px 49px, #7b9db9 49px); }
        .tray { margin-left: auto; }
        .tray button { width: 36px; }
        .tray .ime { padding: 0 4px 4px 0; font-size: 24px; font-weight: 500; }
        .tray .sogou { width: 46px; }
        .tray .clock { display: flex; flex-direction: column; align-items: center; justify-content: center; width: 124px; font: 19px/28px "Open Sans", sans-serif; }
        .tray .notice { width: 54px; }
        .desk { width: 6px; margin-left: 16px; border-left: 2px solid #8ba0ae; }
        .mark { position: absolute; right: 10px; bottom: 8px; font: 16px/22px "Liberation Sans", sans-serif; color: rgba(205, 212, 218, .8); }
      </style>
      <div class="sys">
        <button aria-label="开始"><ps-icon name="start"></ps-icon></button>
        <button aria-label="Cortana"><ps-icon name="cortana"></ps-icon></button>
        <button aria-label="任务视图"><ps-icon name="taskview"></ps-icon></button>
      </div>
      <div class="apps">
        ${apps.map(([n, label, cls]) => `<button class="${cls}" aria-label="${label}"><ps-icon name="${n}"></ps-icon></button>`).join("")}
      </div>
      <div class="tray">
        ${tray(1, 15)}
        <button class="ime">英</button>
        <button class="sogou" aria-label="搜狗输入法"><ps-icon name="t16"></ps-icon></button>
        <button class="clock"><span>16:01</span><span>2020/6/6</span></button>
        <button class="notice" aria-label="通知"><ps-icon name="notice"></ps-icon></button>
        <span class="desk"></span>
      </div>
      <span class="mark">https://blog.csdn.net/weixin_45101429</span>`;
  }
}

/* level meter docked on the screen edge */
class EdgeMeter extends HTMLElement {
  constructor() {
    super();
    this.attachShadow({ mode: "open" });
  }

  connectedCallback() {
    this.shadowRoot.innerHTML = `
      <style>
        :host { display: block; width: 14px; height: 88px; padding: 11px 2px 9px 4px; box-sizing: border-box; border: 1px solid #1c202b; border-right: 0; border-radius: 5px 0 0 5px; background: #343a4d; }
        i { display: block; height: 100%; background: repeating-linear-gradient(transparent 0 2px, #252b3a 2px 3px), linear-gradient(#22283a 26%, #c98d2d 26%, #c3b53c 45%, #7fae58 70%, #3fae9d); }
      </style>
      <i></i>`;
  }
}

class PsApp extends HTMLElement {
  constructor() {
    super();
    this.attachShadow({ mode: "open" });
  }

  connectedCallback() {
    this.shadowRoot.innerHTML = `
      <style>
        :host { display: flex; flex-direction: column; height: 100vh; position: relative; }
        main { display: flex; flex: 1; min-height: 0; border-bottom: 1px solid #2d2d2d; border-top: 1px solid #3a3a3a; background: #3a3a3a; }
        ps-toolbar { flex: none; }
        edge-meter { position: absolute; right: 0; top: 69px; }
      </style>
      <ps-menubar></ps-menubar>
      <ps-options></ps-options>
      <main>
        <ps-toolbar></ps-toolbar>
        <ps-document></ps-document>
        <ps-dock></ps-dock>
        <ps-sidebar></ps-sidebar>
      </main>
      <win-taskbar></win-taskbar>
      <edge-meter></edge-meter>`;
  }
}

customElements.define("ps-icon", PsIcon);
customElements.define("ps-menu-item", PsMenuItem);
customElements.define("ps-menu", PsMenu);
customElements.define("ps-menubar", PsMenubar);
customElements.define("ps-options", PsOptions);
customElements.define("ps-toolbar", PsToolbar);
customElements.define("ps-doc-tab", PsDocTab);
customElements.define("ps-document", PsDocument);
customElements.define("ps-dock", PsDock);
customElements.define("ps-panel", PsPanel);
customElements.define("ps-color-picker", PsColorPicker);
customElements.define("ps-adjustments", PsAdjustments);
customElements.define("ps-paths", PsPaths);
customElements.define("ps-sidebar", PsSidebar);
customElements.define("win-taskbar", WinTaskbar);
customElements.define("edge-meter", EdgeMeter);
customElements.define("ps-app", PsApp);
</script>
</body>
</html>
